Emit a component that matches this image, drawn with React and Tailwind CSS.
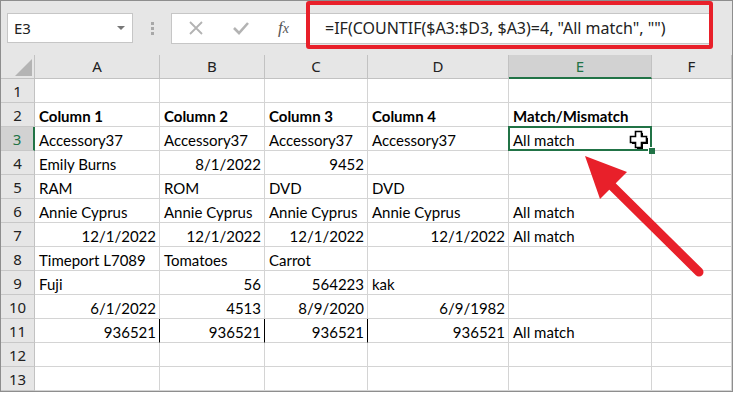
import React from 'react';

const UI_FONT = { fontFamily: '"Noto Sans", "Open Sans", sans-serif' };
const CELL_FONT = { fontFamily: 'Lato, "Liberation Sans", sans-serif' };

const COLS = ['A', 'B', 'C', 'D', 'E', 'F'];

// each row: cells A..F
const DATA = [
  ['', '', '', '', '', ''],
  ['Column 1', 'Column 2', 'Column 3', 'Column 4', 'Match/Mismatch', ''],
  ['Accessory37', 'Accessory37', 'Accessory37', 'Accessory37', 'All match', ''],
  ['Emily Burns', '8/1/2022', '9452', '', '', ''],
  ['RAM', 'ROM', 'DVD', 'DVD', '', ''],
  ['Annie Cyprus', 'Annie Cyprus', 'Annie Cyprus', 'Annie Cyprus', 'All match', ''],
  ['12/1/2022', '12/1/2022', '12/1/2022', '12/1/2022', 'All match', ''],
  ['Timeport L7089', 'Tomatoes', 'Carrot', '', '', ''],
  ['Fuji', '56', '564223', 'kak', '', ''],
  ['6/1/2022', '4513', '8/9/2020', '6/9/1982', '', ''],
  ['936521', '936521', '936521', '936521', 'All match', ''],
  ['', '', '', '', '', ''],
  ['', '', '', '', '', ''],
];

const isNum = (v) => /^[\d/]+$/.test(v);

function Cursor() {
  return (
    <svg className="absolute right-[2px] top-[3px]" width="20" height="20" viewBox="0 0 20 20">
      <path d="M8 3h6v5h5v6h-5v5H8v-5H3V8h5z" fill="#000" />
      <path d="M6.5 1.5h6v5h5v6h-5v5h-6v-5h-5v-6h5z" fill="#fff" stroke="#000" strokeWidth="1.6" />
    </svg>
  );
}

function Arrow() {
  return (
    <svg className="absolute left-0 top-0 pointer-events-none" width="735" height="394">
      <line x1="612" y1="186" x2="699" y2="272" stroke="#e8202a" strokeWidth="9" strokeLinecap="round" />
      <polygon points="585,156 627,172 600,199" fill="#e8202a" />
    </svg>
  );
}

export default function App() {
  return (
    <div className="relative w-[735px] h-[394px] bg-white overflow-hidden">
      <div className="w-[733px] border border-[#8e8e8e] overflow-hidden bg-white">
        {/* formula bar */}
        <div className="h-[54px] bg-[#e6e6e6] flex items-center pl-[6px] pr-[22px]">
          <div className="w-[126px] h-[30px] bg-white border border-[#c6c6c6] flex items-center justify-between pl-[6px] pr-[7px] text-[15px] text-[#222]" style={UI_FONT}>
            <span>E3</span>
            <span className="w-0 h-0 border-l-[4px] border-r-[4px] border-t-[4px] border-l-transparent border-r-transparent border-t-[#777]" />
          </div>
          <div className="w-[38px] flex flex-col items-center gap-[2px]">
            <span className="w-[3px] h-[3px] bg-[#a8a8a8]" />
            <span className="w-[3px] h-[3px] bg-[#a8a8a8]" />
            <span className="w-[3px] h-[3px] bg-[#a8a8a8]" />
          </div>
          <div className="flex-1 h-[31px] bg-white border border-[#c6c6c6] flex items-center">
            <div className="w-[132px] flex items-center pl-[16px] gap-[28px] h-full">
              <svg width="16" height="16" viewBox="0 0 16 16">
                <path d="M2 2L14 14M14 2L2 14" stroke="#b3b3b3" strokeWidth="1.8" />
              </svg>
              <svg width="18" height="16" viewBox="0 0 18 16">
                <path d="M2 8L7 13L16 3" stroke="#b3b3b3" strokeWidth="2.6" fill="none" />
              </svg>
              <span className="text-[17px] italic text-[#555]" style={{ fontFamily: '"Liberation Serif", serif' }}>
                f<span className="text-[14px]">x</span>
              </span>
            </div>
            <div className="pl-[21px] text-[16px] text-[#222] whitespace-nowrap" style={UI_FONT}>
              =IF(COUNTIF($A3:$D3, $A3)=4, "All match", "")
            </div>
          </div>
        </div>

        {/* sheet */}
        <div className="grid grid-cols-[34px_125px_105px_103px_141px_143px_80px] auto-rows-[24px]">
          {/* header row */}
          <div className="h-[24px] bg-[#e6e6e6] border-r border-b border-[#c2c2c2] flex items-end justify-end pr-[2px] pb-[2px]">
            <svg width="17" height="17">
              <polygon points="17,0 17,17 0,17" fill="#b4b4b4" />
            </svg>
          </div>
          {COLS.map((c) => {
            const sel = c === 'E';
            return (
              <div
                key={c}
                className={`h-[24px] flex items-center justify-center text-[15px] border-r ${sel ? 'bg-[#d2d2d2] text-[#217346] border-b-2 border-b-[#217346] border-r-[#c2c2c2]' : 'bg-[#e6e6e6] text-[#222] border-b border-[#c2c2c2]'}`}
                style={UI_FONT}
              >
                {c}
              </div>
            );
          })}

          {DATA.map((row, i) => {
            const n = i + 1;
            const selRow = n === 3;
            return (
              <React.Fragment key={n}>
                <div
                  className={`flex items-center justify-center text-[15px] pt-[1px] border-b border-b-[#c8c8c8] ${selRow ? 'bg-[#d2d2d2] text-[#217346] border-r-2 border-r-[#217346]' : 'bg-[#e6e6e6] text-[#222] border-r border-r-[#c2c2c2]'}`}
                  style={UI_FONT}
                >
                  {n}
                </div>
                {row.map((v, j) => {
                  const thick = n === 11 && j < 3;
                  const sel = n === 3 && j === 4;
                  return (
                    <div
                      key={j}
                      className={`relative flex items-center pl-[4px] pt-[3px] text-[15px] text-black whitespace-nowrap border-b border-[#d4d4d4] ${thick ? 'border-r border-r-black' : 'border-r border-r-[#d4d4d4]'} ${isNum(v) ? 'justify-end pr-[3px]' : 'pr-[4px]'} ${n === 2 ? 'font-bold' : ''}`}
                      style={CELL_FONT}
                    >
                      {v}
                      {sel && (
                        <>
                          <div className="absolute -left-[1px] -top-[1px] -right-[1px] -bottom-[1px] border-2 border-[#217346]" />
                          <Cursor />
                          <div className="absolute z-10 -right-[4px] -bottom-[4px] w-[7px] h-[7px] bg-[#217346] border-l border-t border-white" />
                        </>
                      )}
                    </div>
                  );
                })}
              </React.Fragment>
            );
          })}
        </div>
      </div>

      {/* annotations */}
      <div className="absolute left-[306px] top-[1px] w-[407px] h-[48px] border-[4px] border-[#e8202a] rounded-[3px]" />
      <Arrow />
    </div>
  );
}
